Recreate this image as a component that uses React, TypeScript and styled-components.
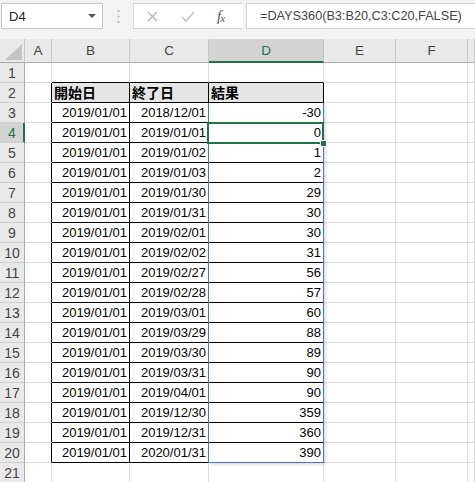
import React from 'react';
import styled, { createGlobalStyle } from 'styled-components';

const GREEN = '#217346';
const GRID = '#dadada';
const HEAD_BG = '#e9e9e9';
const HEAD_SEL = '#d3d3d3';
const BLACK = '#000';

const GlobalStyle = createGlobalStyle`
  html, body { margin: 0; padding: 0; background: #fff; overflow: hidden; }
  body { font-family: "Liberation Sans", Arial, sans-serif; }
  * { box-sizing: border-box; }
`;

const Page = styled.div`
  width: 475px;
  height: 482px;
  overflow: hidden;
  display: flex;
  flex-direction: column;
  background: #fff;
`;

const FormulaBar = styled.div`
  height: 39px;
  flex: none;
  background: #f3f3f3;
  display: flex;
  align-items: flex-start;
  padding: 3px 0 0 1px;
`;

const NameBox = styled.div`
  width: 102px;
  height: 26px;
  flex: none;
  border: 1px solid #c6c6c6;
  background: #fff;
  display: flex;
  align-items: center;
  justify-content: space-between;
  padding: 0 6px 0 7px;
  font-size: 13px;
  color: #222;
`;

const Caret = styled.span`
  width: 0;
  height: 0;
  border-left: 4px solid transparent;
  border-right: 4px solid transparent;
  border-top: 4px solid #555;
`;

const Grip = styled.div`
  width: 30px;
  height: 26px;
  flex: none;
  display: flex;
  align-items: center;
  justify-content: center;
`;

const IconBox = styled.div`
  width: 110px;
  height: 26px;
  flex: none;
  border: 1px solid #d4d4d4;
  border-right: none;
  background: #fff;
  display: flex;
  align-items: center;
  padding-left: 13px;
`;

const IconSlot = styled.span<{ $w: number }>`
  width: ${p => p.$w}px;
  display: flex;
  align-items: center;
  justify-content: flex-start;
`;

const Fx = styled.span`
  font-family: "Liberation Serif", "Times New Roman", serif;
  font-style: italic;
  font-size: 15px;
  color: #555;
  letter-spacing: -1px;
  sub {
    font-size: 11px;
    vertical-align: -1px;
  }
`;

const FormulaInput = styled.div`
  flex: 1;
  height: 26px;
  margin-left: 3px;
  border: 1px solid #d4d4d4;
  border-right: none;
  background: #fff;
  display: flex;
  align-items: center;
  padding-left: 13px;
  font-size: 12.7px;
  color: #444;
  white-space: nowrap;
`;

const Sheet = styled.div`
  position: relative;
  display: grid;
  grid-template-columns: 25px 27px 78px 79px 115px 72px 72px 1fr;
  grid-template-rows: 24px repeat(21, 20px);
  flex: none;
`;

const Corner = styled.div`
  background: ${HEAD_BG};
  border-right: 1px solid #c6c6c6;
  border-bottom: 1px solid #ababab;
  display: flex;
  align-items: flex-end;
  justify-content: flex-end;
  padding: 0 2px 2px 0;
`;

const ColHeader = styled.div<{ $sel?: boolean }>`
  background: ${p => (p.$sel ? HEAD_SEL : HEAD_BG)};
  border-right: 1px solid #c6c6c6;
  border-bottom: ${p => (p.$sel ? `2px solid ${GREEN}` : '1px solid #ababab')};
  display: flex;
  align-items: center;
  justify-content: center;
  font-size: 13.5px;
  color: ${p => (p.$sel ? GREEN : '#444')};
  padding-top: ${p => (p.$sel ? 1 : 0)}px;
`;

const RowHeader = styled.div<{ $sel?: boolean }>`
  background: ${p => (p.$sel ? HEAD_SEL : HEAD_BG)};
  border-right: ${p => (p.$sel ? `2px solid ${GREEN}` : '1px solid #ababab')};
  border-bottom: 1px solid #d0d0d0;
  display: flex;
  align-items: center;
  justify-content: center;
  font-size: 14px;
  color: ${p => (p.$sel ? GREEN : '#444')};
  padding-left: ${p => (p.$sel ? 1 : 0)}px;
`;

const Cell = styled.div<{ $right: string; $bottom: string; $align: 'left' | 'right'; $head?: boolean }>`
  position: relative;
  border-right: 1px solid ${p => p.$right};
  border-bottom: 1px solid ${p => p.$bottom};
  background: ${p => (p.$head ? '#e7e6e6' : '#fff')};
  display: flex;
  align-items: center;
  justify-content: ${p => (p.$align === 'right' ? 'flex-end' : 'flex-start')};
  padding: ${p => (p.$head ? '0 0 0 2px' : '0 2px 0 2px')};
  font-family: ${p =>
    p.$head ? '"Noto Sans CJK JP", sans-serif' : '"Liberation Sans", Arial, sans-serif'};
  font-weight: ${p => (p.$head ? 700 : 400)};
  font-size: ${p => (p.$head ? '14px' : '13px')};
  line-height: 19px;
  color: #000;
  white-space: nowrap;
`;

const SelectionFrame = styled.div`
  position: absolute;
  z-index: 2;
  top: -1px;
  left: -2px;
  right: -1px;
  bottom: -2px;
  border: 2px solid ${GREEN};
  pointer-events: none;
`;

const FillHandle = styled.div`
  position: absolute;
  right: -5px;
  bottom: -5px;
  width: 7px;
  height: 7px;
  background: ${GREEN};
  border: 1px solid #fff;
`;

const SpillRange = styled.div`
  position: absolute;
  z-index: 1;
  grid-column: 5 / 6;
  grid-row: 4 / 22;
  top: 0;
  bottom: 0;
  left: -1px;
  right: 0;
  border: 1px solid #4a73c0;
  border-top: none;
  box-shadow: 2px 2px 3px rgba(0, 0, 0, 0.13);
  pointer-events: none;
`;

const COLS = ['A', 'B', 'C', 'D', 'E', 'F', ''];

const ends = [
  '2018/12/01', '2019/01/01', '2019/01/02', '2019/01/03', '2019/01/30', '2019/01/31',
  '2019/02/01', '2019/02/02', '2019/02/27', '2019/02/28', '2019/03/01', '2019/03/29',
  '2019/03/30', '2019/03/31', '2019/04/01', '2019/12/30', '2019/12/31', '2020/01/31',
];
const results = [-30, 0, 1, 2, 29, 30, 30, 31, 56, 57, 60, 88, 89, 90, 90, 359, 360, 390];

function cellContent(r: number, c: number): { text: string; align: 'left' | 'right'; head?: boolean } {
  if (r === 2) {
    if (c === 1) return { text: '開始日', align: 'left', head: true };
    if (c === 2) return { text: '終了日', align: 'left', head: true };
    if (c === 3) return { text: '結果', align: 'left', head: true };
  }
  if (r >= 3 && r <= 20) {
    const i = r - 3;
    if (c === 1) return { text: '2019/01/01', align: 'right' };
    if (c === 2) return { text: ends[i], align: 'right' };
    if (c === 3) return { text: String(results[i]), align: 'right' };
  }
  return { text: '', align: 'left' };
}

function borders(r: number, c: number) {
  const inTableRows = r >= 2 && r <= 20;
  const right = inTableRows && c >= 0 && c <= 3 ? BLACK : GRID;
  const bottom = c >= 1 && c <= 3 && r >= 1 && r <= 20 ? BLACK : GRID;
  return { right, bottom };
}

const XIcon = () => (
  <svg width="11" height="11" viewBox="0 0 11 11">
    <path d="M1 1 L10 10 M10 1 L1 10" stroke="#b4b4b4" strokeWidth="1.4" fill="none" />
  </svg>
);

const CheckIcon = () => (
  <svg width="14" height="11" viewBox="0 0 14 11">
    <path d="M1 6 L5 10 L13 1" stroke="#c2c2c2" strokeWidth="1.6" fill="none" />
  </svg>
);

const GripDots = () => (
  <svg width="3" height="13" viewBox="0 0 3 13">
    <rect x="0.5" y="0" width="2" height="2" fill="#b8b8b8" />
    <rect x="0.5" y="5.5" width="2" height="2" fill="#b8b8b8" />
    <rect x="0.5" y="11" width="2" height="2" fill="#b8b8b8" />
  </svg>
);

const CornerTriangle = () => (
  <svg width="17" height="16" viewBox="0 0 17 16">
    <polygon points="17,0 17,16 0,16" fill="#c4c4c4" />
  </svg>
);

export default function App() {
  const rows = Array.from({ length: 21 }, (_, i) => i + 1);
  return (
    <Page>
      <GlobalStyle />
      <FormulaBar>
        <NameBox>
          <span>D4</span>
          <Caret />
        </NameBox>
        <Grip>
          <GripDots />
        </Grip>
        <IconBox>
          <IconSlot $w={34}>
            <XIcon />
          </IconSlot>
          <IconSlot $w={36}>
            <CheckIcon />
          </IconSlot>
          <IconSlot $w={24}>
            <Fx>
              f<sub>x</sub>
            </Fx>
          </IconSlot>
        </IconBox>
        <FormulaInput>=DAYS360(B3:B20,C3:C20,FALSE)</FormulaInput>
      </FormulaBar>
      <Sheet>
        <Corner>
          <CornerTriangle />
        </Corner>
        {COLS.map((c, i) => (
          <ColHeader key={'h' + i} $sel={c === 'D'}>
            {c}
          </ColHeader>
        ))}
        {rows.map(r => (
          <React.Fragment key={r}>
            <RowHeader $sel={r === 4}>{r}</RowHeader>
            {COLS.map((_, c) => {
              const { text, align, head } = cellContent(r, c);
              const { right, bottom } = borders(r, c);
              const selected = r === 4 && c === 3;
              return (
                <Cell key={c} $right={right} $bottom={bottom} $align={align} $head={head}>
                  {text}
                  {selected && (
                    <SelectionFrame>
                      <FillHandle />
                    </SelectionFrame>
                  )}
                </Cell>
              );
            })}
          </React.Fragment>
        ))}
        <SpillRange />
      </Sheet>
    </Page>
  );
}
